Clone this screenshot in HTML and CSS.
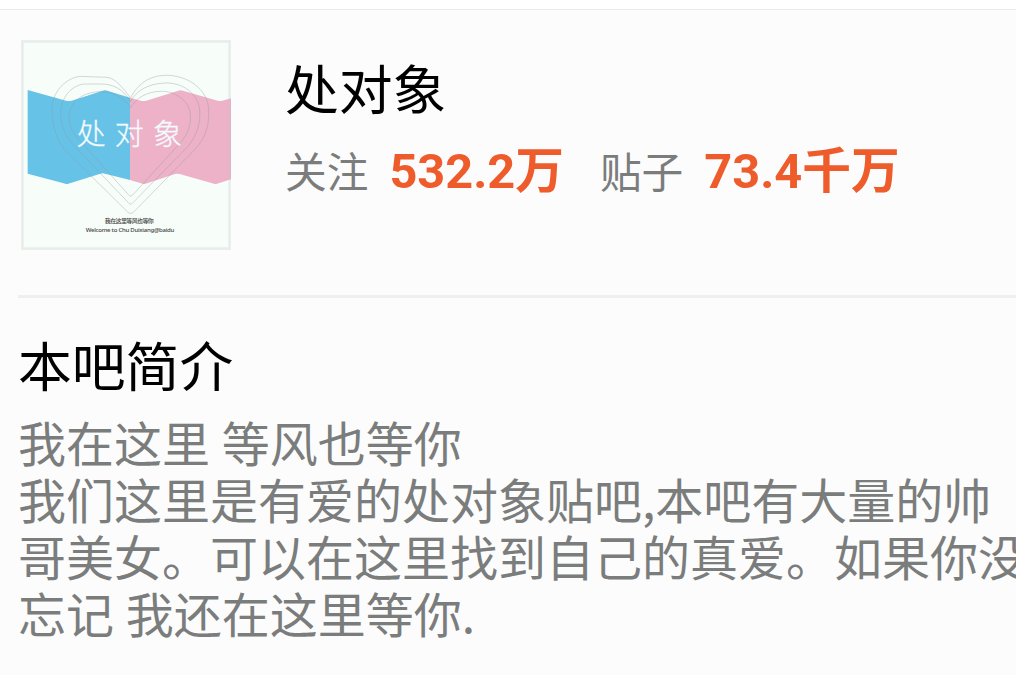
FILE: index.html
```html
<!DOCTYPE html>
<html lang="zh-CN">
<head>
  <meta charset="UTF-8">
  <meta name="viewport" content="width=device-width, initial-scale=1.0">
  <title>处对象吧</title>
  <link rel="stylesheet" href="styles.css">
</head>
<body>
  <div class="page">
    <div class="header">
      <svg class="cover" viewBox="0 0 630 630">
        <rect class="cover-bg" x="4" y="4" width="622" height="622"/>
        <path class="blue" d="M20 150 L138 183 Q145 184 152 182 L245 152 Q252 149 259 152 L327 173 V420 L252 401 Q245 398 238 401 L142 431 Q135 433 128 430 L20 401Z"/>
        <path class="pink" d="M327 173 L362 183 Q369 184 376 182 L472 152 Q479 149 486 152 L590 182 Q597 184 604 182 L630 175 V418 L588 431 Q581 433 574 430 L476 402 Q469 400 462 402 L374 431 Q367 433 360 430 L327 420Z"/>
        <path class="heart" d="M329 173 C310 151 285 113 257 112 L177 109 C130 115 94 160 93 203 C92 260 108 305 140 338 L322 518 Q329 523 336 518 L520 330 C555 294 565 255 563 208 C560 145 495 103 430 106 C375 108 345 142 329 173Z"/>
        <path class="heart" d="M329 185 C307 148 277 132 240 132 H190 C150 136 120 174 119 218 C118 264 138 295 163 321 L324 490 Q329 496 334 490 L500 320 C528 287 539 250 536 210 C532 160 483 126 430 129 C379 132 344 153 329 185Z"/>
        <path class="heart" d="M329 203 C308 175 278 155 240 155 C180 155 144 190 144 234 C145 267 165 290 186 312 L324 466 Q329 471 334 466 L478 309 C501 282 511 253 508 223 C504 180 460 151 414 154 C377 157 347 172 329 203Z"/>
        <text class="cover-title" x="167 281 396" y="316">处对象</text>
        <text class="cover-line" x="325" y="548" textLength="147">我在这里等风也等你</text>
        <text class="cover-line latin" x="327" y="575" textLength="266">Welcome to Chu Duixiang@baidu</text>
        <rect class="cover-frame" x="4" y="4" width="622" height="622"/>
      </svg>
      <div class="info">
        <h1 class="name">处对象</h1>
        <div class="stats">
          <span class="label">关注</span>
          <span class="count follow">532.2万</span>
          <span class="label">贴子</span>
          <span class="count">73.4千万</span>
        </div>
      </div>
    </div>

    <div class="intro">
      <h2 class="intro-title">本吧简介</h2>
      <p class="intro-text">我在这里 等风也等你<br>我们这里是有爱的处对象贴吧,本吧有大量的帅<br>哥美女。可以在这里找到自己的真爱。如果你没<br>忘记 我还在这里等你.</p>
    </div>
  </div>
</body>
</html>
```
FILE: styles.css
```css
* {
  box-sizing: border-box;
}
body {
  margin: 0;
  padding-top: 9px;
  height: 676px;
  overflow: hidden;
  background: #fff;
  font-family: Roboto, "Noto Sans CJK SC", sans-serif;
}
.page {
  height: 666px;
  border-top: 1px solid #ebebeb;
  background: #fcfcfc;
  overflow: hidden;
}
.header {
  display: flex;
  margin-left: 18px;
  padding: 30px 0 0 3px;
  height: 288px;
  border-bottom: 3px solid #efefef;
}
.cover {
  flex: none;
  width: 210px;
  height: 210px;
}
.cover-bg {
  fill: #f7fdf9;
}
.cover-frame {
  fill: none;
  stroke: #bccac3;
  stroke-opacity: 0.28;
  stroke-width: 8;
}
.blue {
  fill: #67c2e8;
}
.pink {
  fill: #edb1c8;
}
.heart {
  fill: none;
  stroke: #8f9a9e;
  stroke-opacity: 0.45;
  stroke-width: 2.5;
}
.cover-title {
  font-family: "Noto Sans CJK SC", sans-serif;
  font-size: 87px;
  font-weight: 300;
  fill: #f3fbfd;
  stroke: #f3fbfd;
  stroke-width: 1;
}
.cover-line {
  font-size: 18px;
  font-weight: 500;
  text-anchor: middle;
  fill: #444;
}
.latin {
  font-family: "Noto Sans", sans-serif;
}
.info {
  margin-left: 54px;
  padding-top: 19px;
}
.name,
.intro-title {
  margin: 0;
  font-size: 53.8px;
  font-weight: 400;
  line-height: 66px;
  color: #000;
}
.stats {
  display: flex;
  align-items: baseline;
  margin-top: 14px;
  line-height: 66px;
  white-space: nowrap;
}
.label {
  font-size: 41.7px;
  color: #7b7d7c;
}
.count {
  margin-left: 21px;
  font-size: 48.7px;
  font-weight: 700;
  color: #ef5c2b;
}
.follow {
  margin-right: 36px;
}
.intro {
  padding: 38px 0 0 18px;
}
.intro-text {
  margin: 11px 0 0;
  font-family: "Noto Sans CJK SC", sans-serif;
  font-size: 48px;
  line-height: 57px;
  word-spacing: 1px;
  white-space: nowrap;
  color: #7b7d7c;
}
```
